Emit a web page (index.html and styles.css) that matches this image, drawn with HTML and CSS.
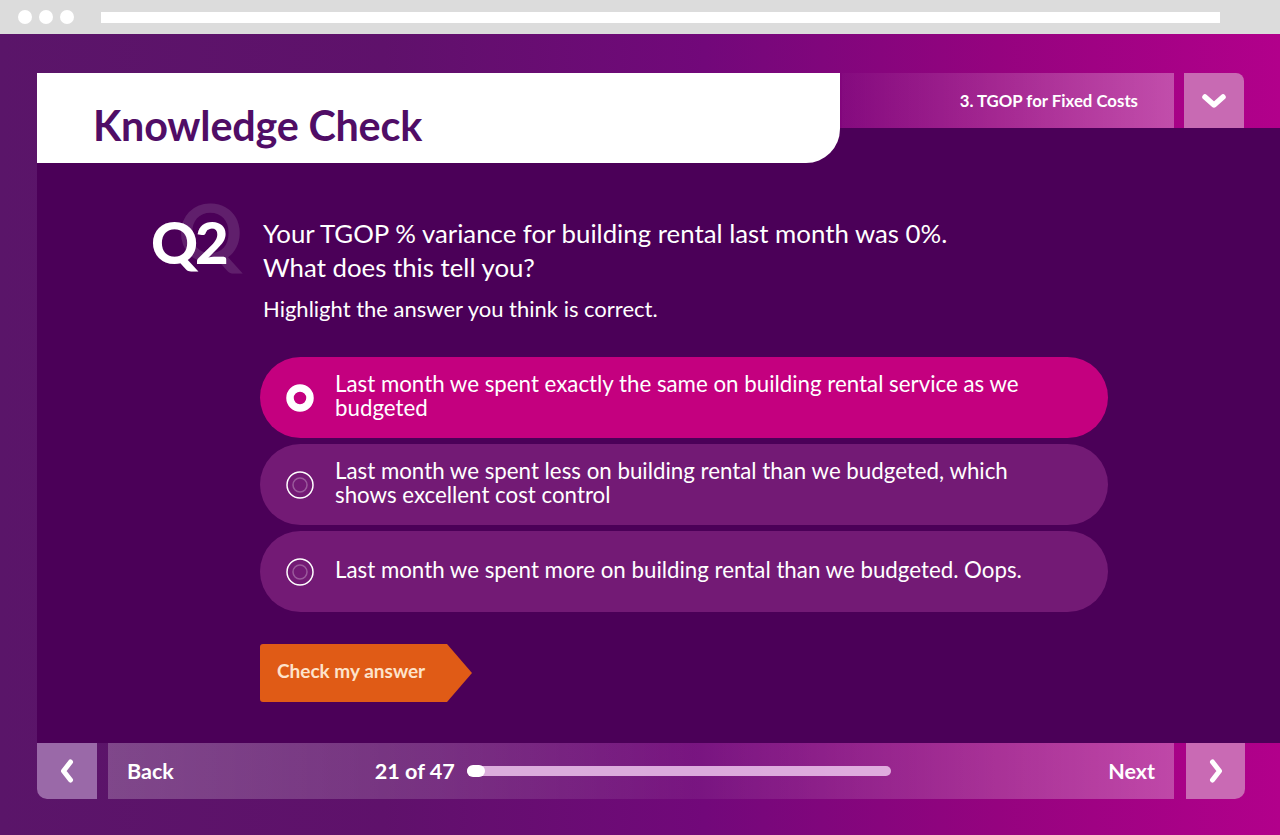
FILE: index.html
```html
<!DOCTYPE html>
<html lang="en">
<head>
<meta charset="utf-8">
<title>Knowledge Check</title>
<link rel="stylesheet" href="styles.css">
</head>
<body>
<div class="chrome">
  <div class="dots"><span class="dot"></span><span class="dot"></span><span class="dot"></span></div>
  <div class="address"></div>
</div>
<div class="stage">
  <header class="top">
    <div class="title-card"><h1 class="title">Knowledge Check</h1></div>
    <div class="section-bar"><span class="section-name">3. TGOP for Fixed Costs</span></div>
    <button class="menu-btn" aria-label="Menu">
      <svg width="26" height="16" viewBox="0 0 26 16"><polyline points="4,4 13,12 22,4" fill="none" stroke="#fff" stroke-width="5.5" stroke-linecap="round" stroke-linejoin="round"/></svg>
    </button>
  </header>
  <main class="panel">
    <div class="qgrid">
      <div class="badge"><span class="badge-text">Q2</span></div>
      <div class="content">
        <p class="question">Your TGOP % variance for building rental last month was 0%.<br>What does this tell you?</p>
        <p class="hint">Highlight the answer you think is correct.</p>
        <div class="options">
          <div class="option selected">
            <svg class="radio" width="28" height="28" viewBox="0 0 28 28"><circle cx="14" cy="14" r="10" fill="none" stroke="#fff" stroke-width="7.5"/></svg>
            <span class="opt-text">Last month we spent exactly the same on building rental service as we budgeted</span>
          </div>
          <div class="option">
            <svg class="radio" width="28" height="28" viewBox="0 0 28 28"><circle cx="14" cy="14" r="13" fill="none" stroke="#fff" stroke-width="1.5"/><circle cx="14" cy="14" r="7" fill="none" stroke="rgba(255,255,255,0.28)" stroke-width="1.5"/></svg>
            <span class="opt-text">Last month we spent less on building rental than we budgeted, which shows excellent cost control</span>
          </div>
          <div class="option">
            <svg class="radio" width="28" height="28" viewBox="0 0 28 28"><circle cx="14" cy="14" r="13" fill="none" stroke="#fff" stroke-width="1.5"/><circle cx="14" cy="14" r="7" fill="none" stroke="rgba(255,255,255,0.28)" stroke-width="1.5"/></svg>
            <span class="opt-text">Last month we spent more on building rental than we budgeted. Oops.</span>
          </div>
        </div>
        <button class="check-btn">Check my answer</button>
      </div>
    </div>
  </main>
  <nav class="nav">
    <button class="nav-sq back-sq" aria-label="Back">
      <svg width="16" height="26" viewBox="0 0 16 26"><polyline points="11.5,4 4.5,13 11.5,22" fill="none" stroke="#fff" stroke-width="5" stroke-linecap="round" stroke-linejoin="round"/></svg>
    </button>
    <div class="nav-bar">
      <span class="nav-label">Back</span>
      <div class="progress">
        <span class="count">21 of 47</span>
        <div class="track"><span class="knob"></span></div>
      </div>
      <span class="nav-label">Next</span>
    </div>
    <button class="nav-sq next-sq" aria-label="Next">
      <svg width="16" height="26" viewBox="0 0 16 26"><polyline points="4.5,4 11.5,13 4.5,22" fill="none" stroke="#fff" stroke-width="5" stroke-linecap="round" stroke-linejoin="round"/></svg>
    </button>
  </nav>
</div>
</body>
</html>
```
FILE: styles.css
```css
* { box-sizing: border-box; }
html, body { margin: 0; padding: 0; }
body {
  width: 1280px;
  height: 835px;
  overflow: hidden;
  font-family: Lato, "Open Sans", "Liberation Sans", sans-serif;
  background: #dcdcdc;
}
p, h1 { margin: 0; }
button { font-family: inherit; border: 0; padding: 0; cursor: pointer; }

.chrome {
  height: 34px;
  background: #dcdcdc;
  display: flex;
  align-items: center;
  padding-left: 18px;
}
.dots { display: flex; gap: 7px; }
.dot { width: 14px; height: 14px; border-radius: 50%; background: #fff; }
.address {
  margin-left: 27px;
  width: 1119px;
  height: 11px;
  background: #fff;
}

.stage {
  height: 801px;
  display: flex;
  flex-direction: column;
  background: linear-gradient(90deg, #5a1569 0%, #5f116b 30%, #72087a 55%, #95037f 78%, #b2008b 100%);
}

.top {
  display: flex;
  align-items: flex-start;
  padding: 39px 36px 0 37px;
  height: 94px;
  position: relative;
  z-index: 2;
}
.title-card {
  width: 803px;
  height: 90px;
  background: #fff;
  border-bottom-right-radius: 34px;
  display: flex;
  align-items: center;
  padding-left: 56px;
  padding-top: 14px;
}
.title {
  font-size: 41.3px;
  font-weight: 700;
  color: #500d66;
  letter-spacing: -0.2px;
}
.section-bar {
  margin-left: 2px;
  width: 332px;
  height: 55px;
  background: linear-gradient(90deg, rgba(255,255,255,0.02) 0%, rgba(255,255,255,0.14) 45%, rgba(255,255,255,0.3) 100%);
  display: flex;
  align-items: center;
  justify-content: flex-end;
  padding-right: 36px;
}
.section-name {
  color: #fff;
  font-weight: 700;
  font-size: 16.8px;
}
.menu-btn {
  margin-left: 10px;
  width: 60px;
  height: 55px;
  background: #c86ab3;
  border-top-right-radius: 8px;
  display: flex;
  align-items: center;
  justify-content: center;
}

.panel {
  flex: 1;
  margin-left: 37px;
  background: #4b0058;
  padding-top: 88px;
  padding-left: 116px;
}
.qgrid {
  display: grid;
  grid-template-columns: 107px 848px;
}
.badge {
  position: relative;
  height: 80px;
}
.badge::before {
  content: "Q";
  position: absolute;
  left: 25px;
  top: -25px;
  font-size: 80px;
  font-weight: 700;
  line-height: 1;
  color: rgba(255,255,255,0.12);
}
.badge-text {
  position: absolute;
  left: -2px;
  top: -3px;
  font-size: 58px;
  font-weight: 900;
  line-height: 1;
  color: #fff;
  letter-spacing: -3px;
}
.content { color: #fff; }
.question {
  font-size: 25.8px;
  line-height: 34px;
  padding-left: 3px;
}
.hint {
  font-size: 22px;
  line-height: 28px;
  padding-left: 3px;
  margin-top: 11px;
}
.options {
  margin-top: 34px;
  display: flex;
  flex-direction: column;
  gap: 6px;
}
.option {
  height: 81px;
  border-radius: 41px;
  background: #731a75;
  display: flex;
  align-items: center;
  gap: 21px;
  padding-left: 26px;
  padding-right: 72px;
  padding-bottom: 4px;
}
.option.selected { background: #c4007f; }
.radio { flex: none; margin-top: 4px; }
.opt-text {
  font-size: 22.3px;
  line-height: 24px;
}
.check-btn {
  margin-top: 32px;
  width: 212px;
  height: 58px;
  background: #e05b16;
  color: #fde3cb;
  font-size: 19px;
  font-weight: 700;
  text-align: left;
  padding-left: 17px;
  padding-bottom: 5px;
  border-radius: 3px 0 0 3px;
  clip-path: polygon(0 0, 187px 0, 100% 50%, 187px 100%, 0 100%);
}

.nav {
  height: 56px;
  margin: 0 35px 36px 37px;
  display: flex;
}
.nav-sq {
  width: 60px;
  height: 56px;
  display: flex;
  align-items: center;
  justify-content: center;
}
.back-sq { background: #9a69a8; border-bottom-left-radius: 10px; }
.next-sq { background: #c96ab4; border-bottom-right-radius: 10px; margin-left: 12px; width: 59px; }
.nav-bar {
  margin-left: 11px;
  width: 1066px;
  display: flex;
  align-items: center;
  padding: 0 19px;
  background: linear-gradient(90deg, rgba(255,255,255,0.22) 0%, rgba(255,255,255,0.14) 30%, rgba(255,255,255,0.05) 55%, rgba(255,255,255,0.14) 75%, rgba(255,255,255,0.28) 100%);
}
.nav-label {
  color: #fff;
  font-size: 21.5px;
  font-weight: 700;
}
.progress {
  display: flex;
  align-items: center;
  margin-left: 201px;
  gap: 12px;
  flex: 1;
}
.count {
  color: #fff;
  font-size: 21.6px;
  font-weight: 700;
}
.track {
  width: 424px;
  height: 10px;
  border-radius: 5px;
  background: rgba(236,196,236,0.85);
  position: relative;
}
.knob {
  position: absolute;
  left: 0;
  top: -1px;
  width: 18px;
  height: 12px;
  border-radius: 6px;
  background: #fff;
}
```
